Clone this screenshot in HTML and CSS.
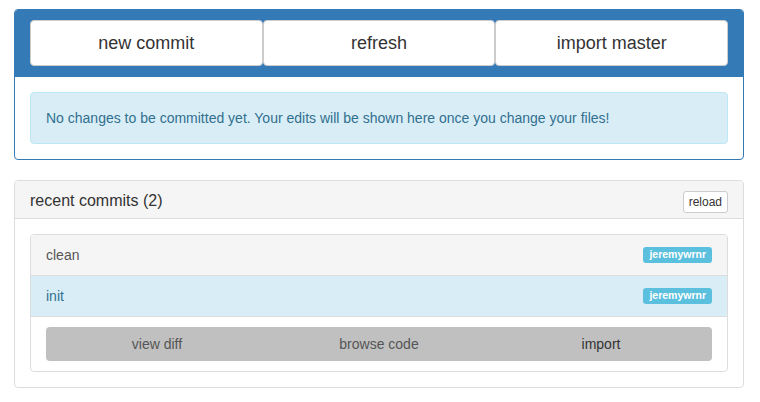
FILE: index.html
```html
<!DOCTYPE html>
<html>
<head>
<meta charset="utf-8">
<link rel="stylesheet" href="styles.css">
</head>
<body>
<div class="page">
  <div class="panel panel-primary">
    <div class="panel-heading">
      <div class="btn-group">
        <button class="btn btn-lg">new commit</button>
        <button class="btn btn-lg">refresh</button>
        <button class="btn btn-lg">import master</button>
      </div>
    </div>
    <div class="panel-body">
      <div class="alert">No changes to be committed yet. Your edits will be shown here once you change your files!</div>
    </div>
  </div>
  <div class="panel panel-default">
    <div class="panel-heading heading-row">
      <h3 class="panel-title">recent commits (2)</h3>
      <button class="btn btn-xs">reload</button>
    </div>
    <div class="panel-body">
      <div class="list-group">
        <div class="list-item item-muted"><span>clean</span><span class="label">jeremywrnr</span></div>
        <div class="list-item item-info"><span>init</span><span class="label">jeremywrnr</span></div>
        <div class="list-item">
          <div class="action-bar">
            <span class="action">view diff</span>
            <span class="action">browse code</span>
            <span class="action action-dark">import</span>
          </div>
        </div>
      </div>
    </div>
  </div>
</div>
</body>
</html>
```

FILE: styles.css
```css
* { box-sizing: border-box; }
html, body { margin: 0; padding: 0; background: #fff; }
body {
  font-family: "Liberation Sans", Arial, sans-serif;
  font-size: 14px;
  line-height: 20px;
  color: #333;
}
.page { padding: 9px 16px 0 14px; }
.panel {
  border: 1px solid #ddd;
  border-radius: 4px;
  margin-bottom: 20px;
  background: #fff;
}
.panel-primary { border-color: #337ab7; }
.panel-primary > .panel-heading {
  background: #337ab7;
  padding: 10px 15px;
  border-bottom: 1px solid #337ab7;
  border-radius: 3px 3px 0 0;
}
.btn-group { display: flex; }
.btn {
  font-family: inherit;
  color: #333;
  background: #fff;
  border: 1px solid #ccc;
  border-radius: 4px;
  cursor: pointer;
}
.btn-lg {
  flex: 1 1 0;
  font-size: 18px;
  line-height: 24px;
  padding: 10px 16px;
  height: 46px;
}
.panel-body { padding: 15px; }
.alert {
  background: #d9edf7;
  border: 1px solid #bce8f1;
  color: #31708f;
  border-radius: 4px;
  padding: 15px;
  font-size: 14px;
  line-height: 20px;
}
.panel-default > .panel-heading {
  background: #f5f5f5;
  border-bottom: 1px solid #ddd;
  border-radius: 3px 3px 0 0;
  padding: 10px 15px;
}
.heading-row {
  display: flex;
  justify-content: space-between;
  align-items: flex-start;
}
.panel-title {
  margin: 0;
  font-size: 16px;
  font-weight: normal;
  line-height: 17px;
  padding-top: 1px;
  margin-bottom: -1px;
  color: #333;
}
.btn-xs {
  font-size: 12px;
  line-height: 18px;
  padding: 1px 5px;
  height: 22px;
  border-radius: 3px;
  margin-bottom: -5px;
}
.list-group {
  border: 1px solid #ddd;
  border-radius: 4px;
}
.list-item {
  display: flex;
  justify-content: space-between;
  align-items: center;
  padding: 10px 15px;
  border-top: 1px solid #ddd;
  min-height: 41px;
}
.list-item:first-child { border-top: none; border-radius: 3px 3px 0 0; min-height: 40px; }
.item-muted { background: #f5f5f5; color: #555; }
.item-info { background: #d9edf7; color: #31708f; }
.label {
  background: #5bc0de;
  color: #fff;
  font-weight: bold;
  font-size: 10.5px;
  line-height: 10.5px;
  padding: 2px 6px 3px;
  border-radius: 3px;
}
.action-bar {
  flex: 1;
  display: flex;
  background: #c0c0c0;
  border-radius: 4px;
  height: 34px;
}
.action {
  flex: 1 1 0;
  text-align: center;
  line-height: 34px;
  color: #555;
}
.action-dark { color: #333; }
```
